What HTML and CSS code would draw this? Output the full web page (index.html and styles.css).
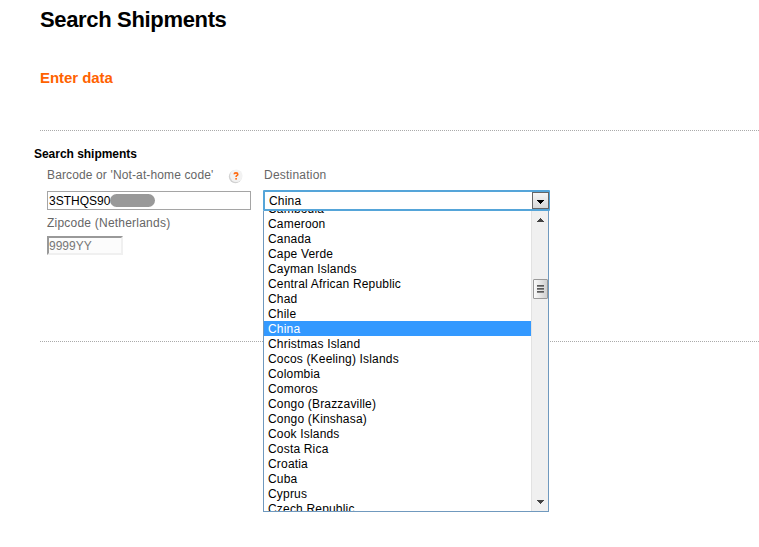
FILE: index.html
```html
<!DOCTYPE html>
<html lang="en">
<head>
    <meta charset="utf-8">
    <title>Search Shipments</title>
    <link rel="stylesheet" href="styles.css">
</head>
<body>
    <h1>Search Shipments</h1>
    <h2>Enter data</h2>

    <form class="search-form">
        <h3>Search shipments</h3>
        <div class="columns">
            <div class="col-code">
                <div class="label-row">
                    <label for="barcode">Barcode or 'Not-at-home code'</label>
                    <svg class="help" width="16" height="16" viewBox="0 0 16 16">
                        <circle cx="7.4" cy="8.6" r="6.6" fill="#d2d2d2"/>
                        <circle cx="8.3" cy="7.7" r="6.3" fill="#f2f2f2"/>
                        <path d="M6.2 6.3Q6.2 4.9 8 4.9Q9.8 4.9 9.8 6.2Q9.8 7.1 8.8 7.6Q8.1 8 8.1 9" fill="none" stroke="#ff6a10" stroke-width="1.6"/>
                        <rect x="7.3" y="10" width="1.6" height="1.6" fill="#ff6a10"/>
                    </svg>
                </div>
                <div class="barcode" id="barcode">3STHQS90<span class="mask"></span></div>
                <label class="zip-label" for="zipcode">Zipcode (Netherlands)</label>
                <input class="zipcode" id="zipcode" type="text" value="9999YY">
            </div>
            <div class="col-destination">
                <label>Destination</label>
                <div class="select">
                    <span>China</span>
                    <div class="select-btn">
                        <svg width="7" height="4" shape-rendering="crispEdges"><path d="M0 0h7v1H6v1H5v1H4v1H3V3H2V2H1V1H0z"/></svg>
                    </div>
                </div>
                <div class="dropdown">
                    <ul>
                        <li>Cambodia</li>
                        <li>Cameroon</li>
                        <li>Canada</li>
                        <li>Cape Verde</li>
                        <li>Cayman Islands</li>
                        <li>Central African Republic</li>
                        <li>Chad</li>
                        <li>Chile</li>
                        <li class="selected">China</li>
                        <li>Christmas Island</li>
                        <li>Cocos (Keeling) Islands</li>
                        <li>Colombia</li>
                        <li>Comoros</li>
                        <li>Congo (Brazzaville)</li>
                        <li>Congo (Kinshasa)</li>
                        <li>Cook Islands</li>
                        <li>Costa Rica</li>
                        <li>Croatia</li>
                        <li>Cuba</li>
                        <li>Cyprus</li>
                        <li>Czech Republic</li>
                    </ul>
                    <div class="scrollbar">
                        <svg class="arrow" width="7" height="4"><path d="M3 0h1v1h1v1h1v1h1v1H0V3h1V2h1V1h1z" fill="#444"/></svg>
                        <div class="thumb"><i></i><i></i><i></i></div>
                        <svg class="arrow" width="7" height="4"><path d="M0 0h7v1H6v1H5v1H4v1H3V3H2V2H1V1H0z" fill="#444"/></svg>
                    </div>
                </div>
            </div>
        </div>
    </form>
</body>
</html>
```
FILE: styles.css
```css
body {
    margin: 0;
    padding: 7px 0 0 40px;
    height: 540px;
    box-sizing: border-box;
    overflow: hidden;
    background: #fff;
    color: #000;
    font-family: Arial, "Liberation Sans", sans-serif;
    font-size: 12px;
}

h1, h2, h3, ul {
    margin: 0;
    padding: 0;
}

h1 {
    font-size: 22px;
    line-height: 26px;
    letter-spacing: -0.34px;
}

h2 {
    margin-top: 35px;
    color: #ff6200;
    font-size: 15px;
    line-height: 20px;
    letter-spacing: -0.05px;
}

.search-form {
    height: 210px;
    margin-top: 42px;
    border-top: 1px dotted #aaa;
    border-bottom: 1px dotted #aaa;
}

h3 {
    margin-left: -6px;
    padding-top: 15px;
    font-size: 12px;
    line-height: 16px;
    letter-spacing: -0.03px;
}

.columns {
    display: flex;
    gap: 12px;
    margin-left: 7px;
    padding-top: 4px;
}

.col-code {
    width: 204px;
}

label {
    display: block;
    color: #666;
    line-height: 18px;
    letter-spacing: 0.22px;
    white-space: nowrap;
}

.label-row {
    display: flex;
    justify-content: space-between;
    padding-right: 7px;
}

.label-row label {
    letter-spacing: 0.13px;
}

.help {
    margin-top: 2px;
}

.barcode {
    display: flex;
    align-items: center;
    box-sizing: border-box;
    height: 19px;
    margin-top: 7px;
    padding-left: 1px;
    border: 1px solid #a5a5a5;
}

.mask {
    width: 45px;
    height: 13px;
    border-radius: 7px;
    background: #999;
}

.zip-label {
    margin-top: 4px;
}

.zipcode {
    display: block;
    box-sizing: border-box;
    width: 76px;
    height: 19px;
    margin-top: 4px;
    padding: 0;
    border: 2px solid #f0f0f0;
    border-top-color: #999;
    border-left-color: #999;
    background: #fcfcfc;
    color: #777;
    font: inherit;
}

.col-destination {
    width: 288px;
}

.col-destination label {
    padding-left: 1px;
}

.select {
    display: flex;
    justify-content: space-between;
    align-items: center;
    box-sizing: border-box;
    width: 287px;
    height: 21px;
    margin-top: 6px;
    padding-left: 4px;
    border: 2px solid #55a5d9;
    border-right-width: 1px;
    border-radius: 1px;
    background: #fff;
    letter-spacing: 0.2px;
}

.select-btn {
    display: flex;
    justify-content: center;
    align-items: center;
    box-sizing: border-box;
    width: 17px;
    height: 17px;
    padding-top: 3px;
    border: 1px solid #666;
    background: linear-gradient(#f6f6f6, #d8d8d8);
}

.dropdown {
    display: flex;
    box-sizing: border-box;
    width: 286px;
    height: 301px;
    overflow: hidden;
    border: 1px solid #7099be;
    border-top: 0;
    background: #fff;
}

.dropdown ul {
    flex: 1;
    margin-top: -10px;
    list-style: none;
}

.dropdown li {
    height: 15px;
    padding-left: 4px;
    line-height: 17px;
    letter-spacing: 0.18px;
}

.dropdown .selected {
    background: #3399ff;
    color: #fff;
}

.scrollbar {
    display: flex;
    flex-direction: column;
    align-items: center;
    width: 17px;
    padding: 7px 0;
    box-sizing: border-box;
    border-left: 1px solid #e2e2e2;
    background: #f0f0f0;
}

.thumb {
    display: flex;
    flex-direction: column;
    align-items: center;
    justify-content: center;
    gap: 1px;
    box-sizing: border-box;
    width: 15px;
    height: 20px;
    margin-top: 57px;
    margin-bottom: auto;
    border: 1px solid #999;
    border-radius: 1px;
    background: linear-gradient(90deg, #fafafa, #d0d0d0);
}

.thumb i {
    width: 7px;
    height: 2px;
    background: linear-gradient(#444, #999);
}
```
